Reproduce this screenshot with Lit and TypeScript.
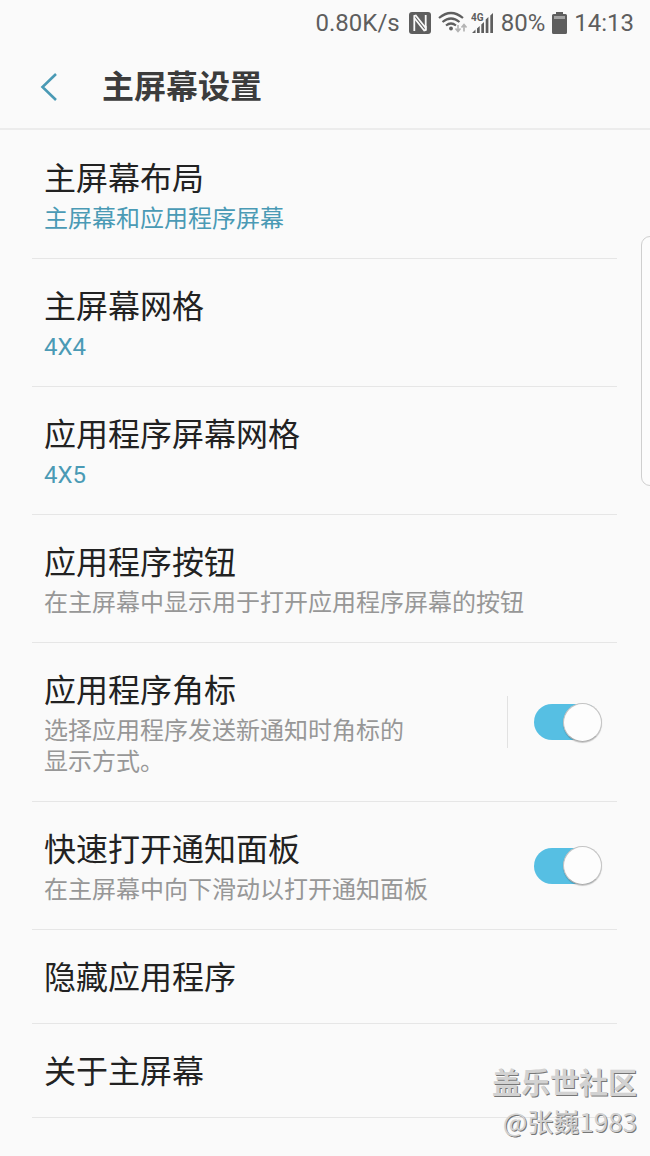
import { LitElement, html, css, nothing } from "lit";
import { customElement, property, state } from "lit/decorators.js";
import { classMap } from "lit/directives/class-map.js";

interface Setting {
  id: string;
  title: string;
  summary?: string;
  accent?: boolean;
  toggle?: "plain" | "split";
}

const SETTINGS: Setting[] = [
  { id: "layout", title: "主屏幕布局", summary: "主屏幕和应用程序屏幕", accent: true },
  { id: "home-grid", title: "主屏幕网格", summary: "4X4", accent: true },
  { id: "apps-grid", title: "应用程序屏幕网格", summary: "4X5", accent: true },
  { id: "apps-button", title: "应用程序按钮", summary: "在主屏幕中显示用于打开应用程序屏幕的按钮" },
  { id: "badges", title: "应用程序角标", summary: "选择应用程序发送新通知时角标的显示方式。", toggle: "split" },
  { id: "quick-panel", title: "快速打开通知面板", summary: "在主屏幕中向下滑动以打开通知面板", toggle: "plain" },
  { id: "hide-apps", title: "隐藏应用程序" },
  { id: "about", title: "关于主屏幕" },
];

@customElement("status-bar")
class StatusBar extends LitElement {
  static styles = css`
    :host {
      display: flex;
      justify-content: flex-end;
      align-items: center;
      gap: 7px;
      height: 46px;
      padding: 0 16px;
      color: #5e5e5e;
      font-size: 24px;
      line-height: 28px;
    }
    svg {
      display: block;
      flex: none;
    }
    .icons {
      display: flex;
      align-items: center;
      gap: 3px;
    }
  `;

  render() {
    return html`
      <span>0.80K/s</span>
      <div class="icons">
        <svg width="28" height="24" viewBox="0 0 28 24" aria-label="NFC">
          <rect x="2" y="1" width="22" height="22" rx="3" fill="#5e5e5e" />
          <path d="M7.300 20V5L8.800 4.500L18.700 17V4" fill="none" stroke="#fafafa" stroke-width="1.800" />
          <path d="M7.300 7L17.200 19.500L18.700 19V15" fill="none" stroke="#fafafa" stroke-width="1.800" />
        </svg>
        <svg width="30" height="24" viewBox="0 0 30 24" aria-label="Wi-Fi">
          <g fill="none" stroke="#5e5e5e" stroke-width="2.2">
            <path d="M1 7Q13 -3 25 7" />
            <path d="M4.500 11Q13 4 21.500 11" />
            <path d="M8 14.500Q13 10.500 18 14.500" />
          </g>
          <circle cx="13" cy="17.500" r="1.900" fill="#5e5e5e" />
          <path d="M20 14V19M17.500 17.500L20 20.500L22.500 17.500M26 20.500V15M23.500 16.500L26 13.500L28.500 16.500" fill="none" stroke="#b4b4b4" stroke-width="1.700" />
        </svg>
        <svg width="23" height="24" viewBox="0 0 23 24" aria-label="4G">
          <path d="M1 22L4.500 18.500V22ZM6 17.500L8.700 15V22H6ZM10.300 13.500L13 11V22H10.300ZM14.700 8.500L17.400 6V22H14.700ZM19.300 4.500L22 2V22H19.300Z" fill="#5e5e5e" />
          <text x="0" y="10" font-size="10" font-weight="700" fill="#5e5e5e">4G</text>
        </svg>
      </div>
      <span>80%</span>
      <svg width="15" height="24" viewBox="0 0 15 24" aria-label="电池">
        <path d="M4 1H11V3H13.500Q15 3 15 4.500V21.500Q15 23 13.500 23H1.500Q0 23 0 21.500V4.500Q0 3 1.500 3H4Z" fill="#5e5e5e" />
        <rect x="2" y="5" width="11" height="3" fill="#a3a3a3" />
      </svg>
      <time>14:13</time>
    `;
  }
}

@customElement("setting-row")
class SettingRow extends LitElement {
  @property({ attribute: false }) item!: Setting;
  @state() private on = true;

  static styles = css`
    :host {
      display: block;
    }
    .row {
      display: flex;
      align-items: center;
      border-bottom: 1px solid #e6e6e6;
      padding-right: 15px;
    }
    .text {
      display: block;
      flex: 1;
      min-width: 0;
      margin: 0;
      padding: 24px 0 23px 12px;
      border: 0;
      background: none;
      font: inherit;
      text-align: left;
      cursor: pointer;
    }
    .single {
      padding-bottom: 20px;
    }
    .title {
      display: block;
      color: #222;
      font-size: 32px;
      line-height: 49px;
    }
    .summary {
      display: block;
      color: #979797;
      font-size: 24px;
      line-height: 31px;
    }
    .accent {
      color: #4a9ab5;
    }
    .split .summary {
      max-width: 15em;
    }
    .divider {
      width: 1px;
      height: 52px;
      margin-right: 26px;
      background: #e2e2e2;
    }
    .switch {
      appearance: none;
      flex: none;
      display: flex;
      align-items: center;
      width: 68px;
      height: 36px;
      margin: 0;
      border-radius: 18px;
      background: linear-gradient(#b9b9b9, #b9b9b9) left / 58px 36px no-repeat;
      cursor: pointer;
    }
    .switch::before {
      content: "";
      box-sizing: border-box;
      flex: none;
      width: 39px;
      height: 39px;
      border: 1px solid #c4c4c4;
      border-bottom-color: #adadad;
      border-radius: 50%;
      background: #fdfdfd;
      box-shadow: 0 1px 1px rgba(0, 0, 0, 0.2);
    }
    .switch:checked {
      justify-content: flex-end;
      background-image: linear-gradient(#56bfe3, #56bfe3);
    }
  `;

  render() {
    const { id, title, summary, accent, toggle } = this.item;
    const body = html`
      <span class="title">${title}</span>
      ${summary ? html`<span class=${classMap({ summary: true, accent: !!accent })}>${summary}</span>` : nothing}
    `;
    return html`
      <div class=${classMap({ row: true, split: toggle === "split" })}>
        ${toggle === "plain"
          ? html`<label class="text" for=${id}>${body}</label>`
          : html`<button class=${classMap({ text: true, single: !summary })} type="button">${body}</button>`}
        ${toggle === "split" ? html`<span class="divider"></span>` : nothing}
        ${toggle
          ? html`<input
              class="switch"
              id=${id}
              type="checkbox"
              role="switch"
              aria-label=${title}
              .checked=${this.on}
              @change=${(e: Event) => (this.on = (e.target as HTMLInputElement).checked)}
            />`
          : nothing}
      </div>
    `;
  }
}

@customElement("app-root")
class AppRoot extends LitElement {
  static styles = css`
    :host {
      display: block;
      position: relative;
      box-sizing: border-box;
      min-height: 100vh;
      overflow: hidden;
      background: #fafafa;
      font-family: Roboto, "Noto Sans CJK SC", sans-serif;
    }
    .header {
      display: flex;
      align-items: center;
      gap: 36px;
      height: 82px;
      padding: 0 32px;
      border-bottom: 2px solid #ececec;
    }
    .back {
      display: flex;
      justify-content: center;
      width: 34px;
      padding: 0;
      border: 0;
      background: none;
      cursor: pointer;
    }
    .heading {
      margin: 0;
      color: #3c3c3c;
      font-size: 32px;
      font-weight: 700;
      line-height: 48px;
    }
    .list {
      margin: 0;
      padding: 1px 33px 0 32px;
      list-style: none;
    }
    .edge {
      position: absolute;
      top: 236px;
      right: -12px;
      box-sizing: border-box;
      width: 21px;
      height: 250px;
      padding: 0;
      border: 1px solid #cfcfcf;
      border-radius: 9px;
      background: #fcfcfc;
    }
    .watermark {
      position: absolute;
      right: 13px;
      bottom: 18px;
      color: #d2d2d2;
      text-align: right;
      text-shadow: 1px 1px 0 #777;
      pointer-events: none;
    }
    .community {
      display: block;
      font-size: 29px;
      font-weight: 700;
      line-height: 40px;
    }
    .author {
      display: block;
      font-family: "Noto Sans CJK SC", sans-serif;
      font-size: 26px;
      line-height: 34px;
    }
  `;

  render() {
    return html`
      <status-bar></status-bar>
      <header class="header">
        <button class="back" type="button" aria-label="返回">
          <svg width="18" height="30" viewBox="0 0 18 30">
            <path d="M16 2L2.500 15L16 28" fill="none" stroke="#4a9ab5" stroke-width="2.600" />
          </svg>
        </button>
        <h1 class="heading">主屏幕设置</h1>
      </header>
      <main>
        <ul class="list">
          ${SETTINGS.map((item) => html`<li><setting-row .item=${item}></setting-row></li>`)}
        </ul>
      </main>
      <button class="edge" type="button" aria-label="侧屏面板"></button>
      <div class="watermark">
        <span class="community">盖乐世社区</span>
        <span class="author">@张巍1983</span>
      </div>
    `;
  }
}
